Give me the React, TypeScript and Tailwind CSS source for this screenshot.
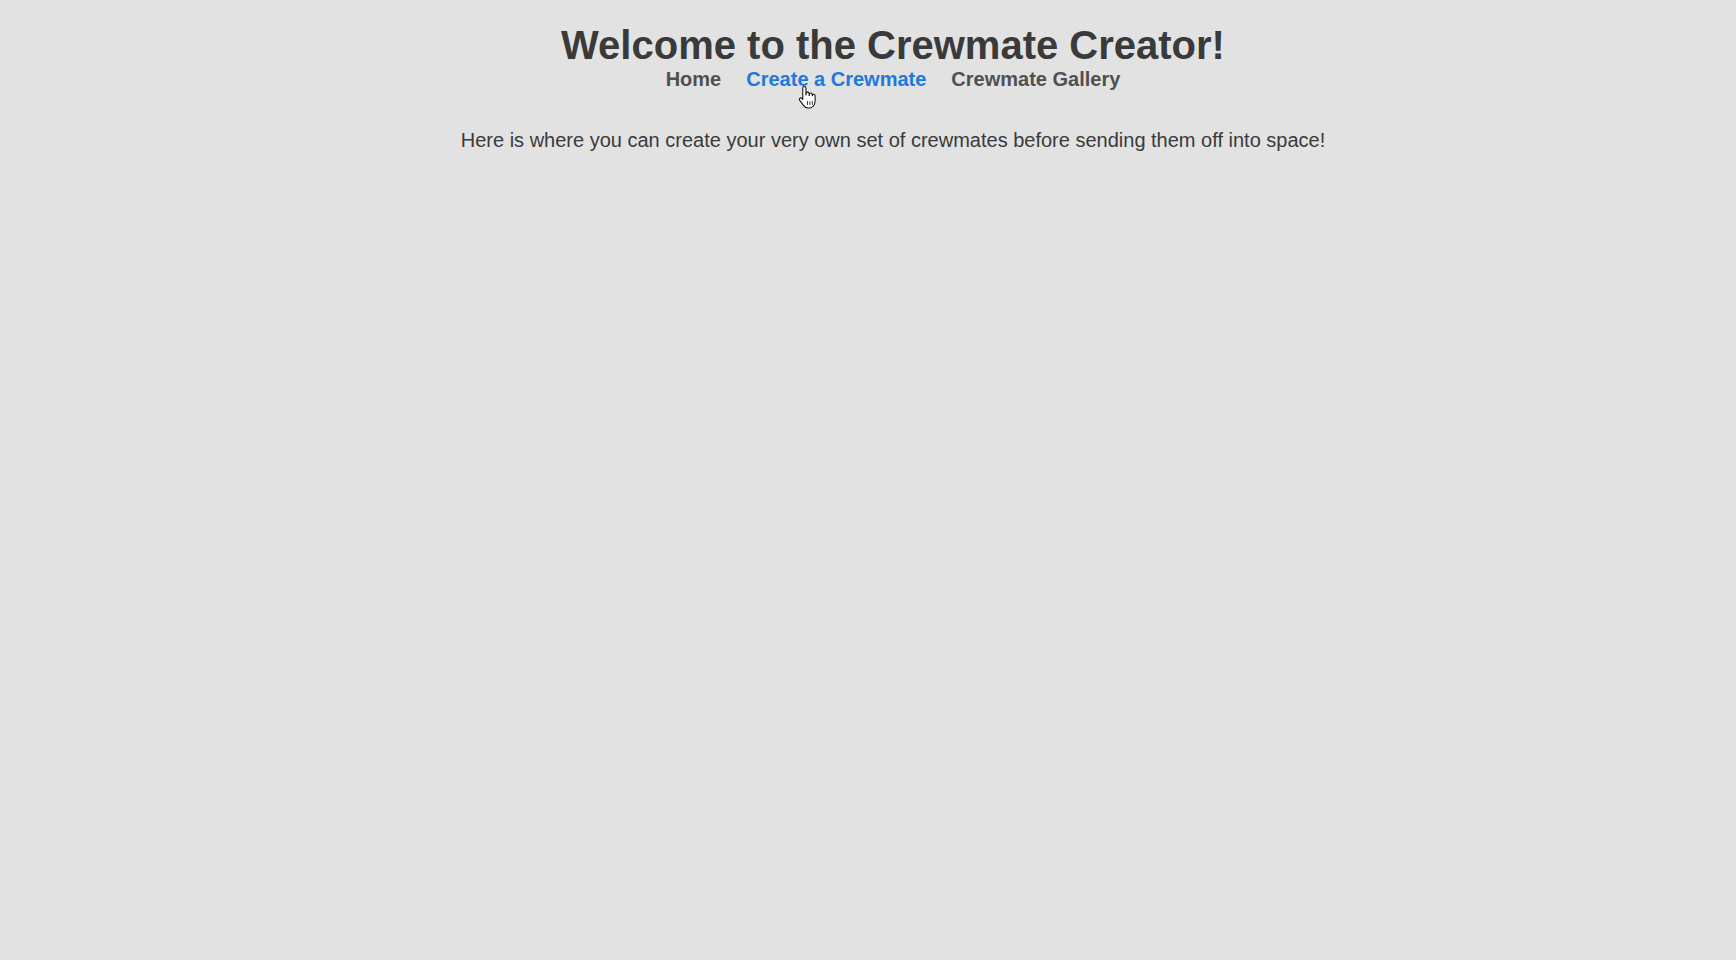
import React from "react";

export default function App() {
  return (
    <div className="relative min-h-screen w-full bg-[#e2e2e2] pl-[50px] text-center font-['Liberation_Sans',Arial,sans-serif]">
      <h1 className="m-0 pt-[22px] text-[40px] font-bold leading-[46px] text-[#3a3a3a]">
        Welcome to the Crewmate Creator!
      </h1>
      <nav className="flex justify-center gap-[25px] text-[20px] font-bold leading-[23px]">
        <a className="text-[#505050]">Home</a>
        <a className="text-[#1f78e0]">Create a Crewmate</a>
        <a className="text-[#505050]">Crewmate Gallery</a>
      </nav>
      <p className="mt-[38px] text-[20px] leading-[23px] text-[#3a3a3a]">
        Here is where you can create your very own set of crewmates before sending them off into space!
      </p>
      <svg
        className="absolute left-[798px] top-[85px]"
        width="19"
        height="25"
        viewBox="0 0 18 23"
      >
        <path
          d="M6 1a1.5 1.5 0 0 1 1.5 1.5V9h.2V7.8a1.4 1.4 0 0 1 2.8 0V9.5h.2V8.6a1.4 1.4 0 0 1 2.8 0v1.2h.1a1.3 1.3 0 0 1 2.6 0V15c0 3.5-2.5 6.5-5.5 6.5H9.5c-2 0-3.2-1-4.3-2.5L1.5 14a1.4 1.4 0 0 1 2.2-1.7L4.5 13.3V2.5A1.5 1.5 0 0 1 6 1z"
          fill="#ffffff"
          stroke="#111111"
          strokeWidth="1"
          strokeLinejoin="round"
        />
        <path d="M9 15v3.5M11.3 15v3.5M13.6 15v3.5" stroke="#111111" strokeWidth="0.8" />
      </svg>
    </div>
  );
}
